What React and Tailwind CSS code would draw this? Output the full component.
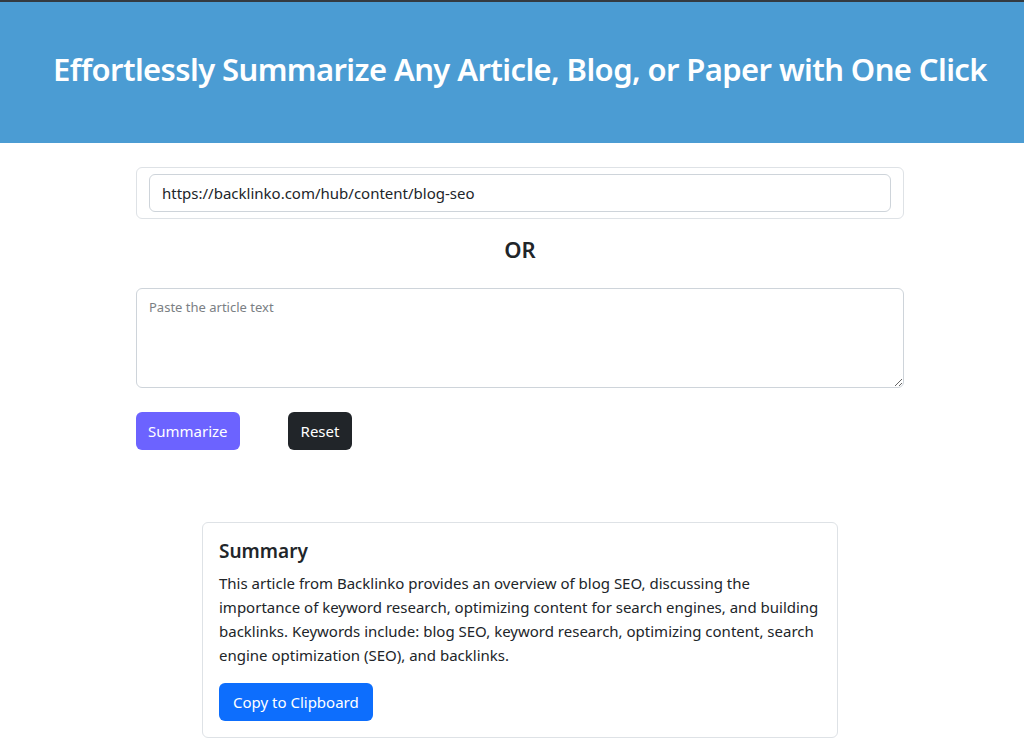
import { useState } from 'react';

const summary =
  'This article from Backlinko provides an overview of blog SEO, discussing the importance of keyword research, optimizing content for search engines, and building backlinks. Keywords include: blog SEO, keyword research, optimizing content, search engine optimization (SEO), and backlinks.';

export default function App() {
  const [url, setUrl] = useState('https://backlinko.com/hub/content/blog-seo');
  const [text, setText] = useState('');

  return (
    <div className="min-h-screen bg-white text-[#212529] font-['Noto_Sans',sans-serif]">
      {/* Header */}
      <header className="border-t-2 border-[#343a40] bg-[#4b9cd3] h-[143px] flex items-center justify-center pl-4 pb-[6px]">
        <h1 className="text-white text-[31px] font-semibold tracking-[-0.6px] leading-none">
          Effortlessly Summarize Any Article, Blog, or Paper with One Click
        </h1>
      </header>

      <main className="pl-4">
        <div className="w-[768px] mx-auto pt-[24px]">
          {/* URL input */}
          <div className="border border-[#dee2e6] rounded-md px-3 py-[6px]">
            <input
              value={url}
              onChange={(e) => setUrl(e.target.value)}
              className="w-full h-[38px] border border-[#ced4da] rounded-md px-3 text-[15px] text-[#212529] outline-none"
            />
          </div>

          <div className="text-center text-[22px] font-semibold mt-[16px] mb-[25px] leading-[28px]">OR</div>

          <textarea
            value={text}
            onChange={(e) => setText(e.target.value)}
            placeholder="Paste the article text"
            className="block w-full h-[100px] border border-[#ced4da] rounded-md px-3 py-[9px] text-[13px] placeholder:text-[#7b7f84] outline-none"
          />

          <div className="flex gap-12 mt-6">
            <button className="h-[38px] px-3 rounded-md bg-[#6c63ff] text-white text-[15px]">Summarize</button>
            <button className="h-[38px] px-[13px] rounded-md bg-[#212529] text-white text-[15px]">Reset</button>
          </div>
        </div>

        {/* Summary card */}
        <div className="w-[636px] mx-auto mt-[72px] border border-[#dee2e6] rounded-md p-4">
          <h5 className="text-[19px] font-semibold leading-6 mb-2">Summary</h5>
          <p className="text-[15px] leading-6 mb-4">{summary}</p>
          <button className="h-[38px] px-[14px] rounded-md bg-[#0d6efd] text-white text-[15px]">Copy to Clipboard</button>
        </div>
      </main>
    </div>
  );
}
